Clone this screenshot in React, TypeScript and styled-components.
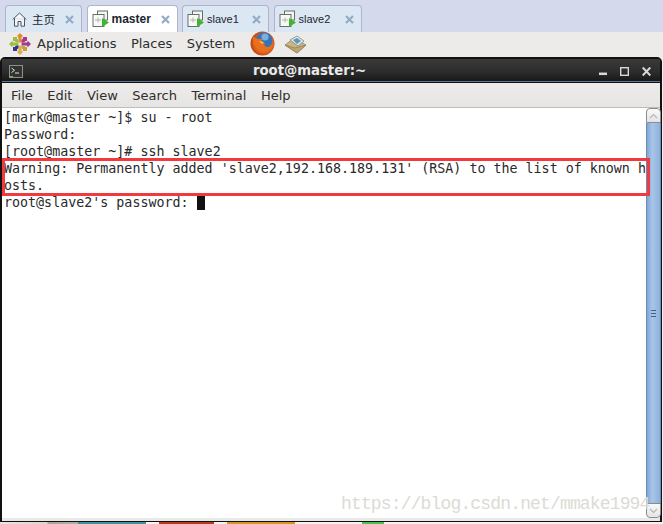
import React from "react";
import styled, { createGlobalStyle } from "styled-components";

const Global = createGlobalStyle`
  html, body { margin: 0; padding: 0; background: #f0f0ee; }
  body { width: 663px; height: 524px; overflow: hidden; font-family: "Liberation Sans", sans-serif; }
  * { box-sizing: border-box; }
`;
const Page = styled.div`display:flex;flex-direction:column;width:663px;height:524px;overflow:hidden;`;
const TabBar = styled.div`display:flex;align-items:flex-end;gap:4.5px;height:32px;padding-left:5px;background:#d4d9ec;flex:none;`;
const Tab = styled.div<{ $active?: boolean; $w: number }>`
  display:flex;align-items:center;width:${p => p.$w}px;height:27px;padding:0 7px 0 ${p => p.$active ? 4 : 4}px;
  gap:2px;border:1px solid #a9b6cc;border-bottom:0;border-radius:4px 4px 0 0;
  background:${p => p.$active ? "#ffffff" : "#dce7f4"};
  font-size:${p => p.$active ? 12 : 11}px;font-weight:${p => p.$active ? 700 : 400};color:#1c2530;
`;
const TabLabel = styled.span<{ $cjk?: boolean }>`flex:1;white-space:nowrap;font-size:${p => p.$cjk ? "11.5px" : "inherit"};font-family:${p => p.$cjk ? `"Noto Sans CJK SC", sans-serif` : `"Liberation Sans", sans-serif`};`;
const TabGlyph = styled.svg`flex:none;`;
const HomeGlyph = styled(TabGlyph)`margin:0 3px 0 2px;`;
const Panel = styled.div`display:flex;align-items:center;height:25px;padding:0 0 2px 9px;background:#ecebe9;flex:none;font-family:"DejaVu Sans",sans-serif;font-size:13px;color:#2d2d2d;`;
const PanelItem = styled.span`margin-right:14.5px;&:first-of-type{margin-left:6px;}`;
const PanelGlyph = styled.svg`flex:none;`;
const MailGlyph = styled(PanelGlyph)`margin:1px 0 0 9px;`;
const TerminalWindow = styled.div`display:flex;flex-direction:column;flex:1;width:662px;min-height:0;border:2px solid #111;border-bottom-width:1px;border-radius:5px 5px 0 0;`;
const TitleBar = styled.div`display:flex;align-items:center;height:23px;padding:0 9px 0 7px;background:linear-gradient(#3a3a3a,#2c2c2c 60%,#181818);border-bottom:1px solid #5d7796;flex:none;`;
const TitleText = styled.span`flex:1;margin-right:3px;text-align:center;font-family:"DejaVu Sans",sans-serif;font-weight:700;font-size:13.25px;color:#e9e9e9;`;
const TermGlyph = styled.svg`flex:none;margin-top:2px;`;
const WindowButtons = styled.div`display:flex;gap:13px;align-items:center;margin-top:3px;`;
const Divider = styled.div`height:1px;background:#111;flex:none;`;
const MenuBar = styled.div`display:flex;align-items:center;gap:14.5px;height:25px;padding-left:9px;background:linear-gradient(#edecea,#e6e5e3);border-bottom:1px solid #bdbdbb;flex:none;font-family:"DejaVu Sans",sans-serif;font-size:13px;color:#2e2e2e;`;
const Content = styled.div`position:relative;display:flex;flex:1;min-height:0;background:#fff;border-bottom:3px solid #e9e9e9;`;
const Screen = styled.pre`flex:1;margin:0;padding:1px 0 0 2px;font-family:"DejaVu Sans Mono","Liberation Mono",monospace;font-size:13.33px;line-height:17px;color:#2a2a2a;white-space:pre;`;
const Cursor = styled.span`display:inline-block;width:8px;height:15px;background:#111;vertical-align:-3px;`;
const Scrollbar = styled.div`display:flex;flex-direction:column;width:15px;flex:none;`;
const ScrollButton = styled.div<{ $down?: boolean }>`height:15px;flex:none;border:1px solid #8c8c8c;border-radius:${p => p.$down ? "0 0 4px 4px" : "4px 4px 0 0"};background:linear-gradient(#fafafa,#e4e4e4);display:flex;align-items:center;justify-content:center;`;
const Thumb = styled.div`flex:1;display:flex;align-items:center;justify-content:center;background:linear-gradient(90deg,#7ea5d4,#a9c6e8 40%,#8cb0dc);border-left:1px solid #6d8db5;border-right:1px solid #6d8db5;`;
const Grip = styled.div`width:5px;height:7px;border-top:1px solid #3f628f;border-bottom:1px solid #3f628f;position:relative;&::after{content:"";position:absolute;left:0;right:0;top:2px;height:1px;background:#3f628f;}`;
const Highlight = styled.div`position:absolute;left:0;top:50px;width:648px;height:38px;border:3px solid #f03a3e;pointer-events:none;`;
const Watermark = styled.div`position:absolute;left:339px;top:386px;font-family:"Liberation Mono",monospace;font-size:18px;letter-spacing:-.85px;color:#dcdbd4;white-space:nowrap;`;
const Dock = styled.div`display:flex;height:2px;flex:none;background:#f4f4f2;`;
const DockBlock = styled.div<{ $w: number; $c: string; $ml: number }>`width:${p => p.$w}px;margin-left:${p => p.$ml}px;background:${p => p.$c};`;

const CloseX = () => (
  <TabGlyph width="9" height="9" viewBox="0 0 9 9"><path d="M1 1l7 7M8 1l-7 7" stroke="#94abc6" strokeWidth="2.2" /></TabGlyph>
);
const Home = () => (
  <HomeGlyph width="15" height="15" viewBox="0 0 15 15">
    <path d="M.7 7.5L7.5 1l6.800 6.500M2.500 6.200v8h3.500V9.500h3v4.700h3.500v-8" fill="#f4f6f8" stroke="#4c5560" strokeWidth="1" />
  </HomeGlyph>
);
const Vm = () => (
  <TabGlyph width="18" height="18" viewBox="0 0 18 18">
    <rect x="5.5" y="1" width="10" height="9" fill="#f3f5f3" stroke="#66706a" />
    <rect x="1" y="4.5" width="11" height="12" fill="#f9f9f7" stroke="#66706a" />
    <path d="M3 10h6M6 7.5v5" stroke="#a8b8a8" />
    <path d="M10 8l7 4.5-7 4.5z" fill="#3fb52f" />
  </TabGlyph>
);
const CentOs = () => (
  <PanelGlyph width="22" height="22" viewBox="0 0 22 22">
    <path d="M11 0l3 3-1.500 1.500v5h-3v-5L8 3z" fill="#d9902f" />
    <path d="M22 11l-3 3-1.500-1.500h-5v-3h5L19 8z" fill="#a13c96" />
    <path d="M11 22l-3-3 1.500-1.500v-5h3v5L14 19z" fill="#d6b04a" />
    <path d="M0 11l3-3 1.500 1.500h5v3h-5L3 14z" fill="#9bbf3f" />
    <path d="M4 4h4v1.500L9.500 7v2.500H7L5.500 8H4z" fill="#a7b84a" />
    <path d="M18 4v4h-1.500L15 9.500h-2.500V7L14 5.500V4z" fill="#b0367f" />
    <path d="M18 18h-4v-1.500L12.500 15v-2.500H15l1.500 1.500H18z" fill="#c7a13a" />
    <path d="M4 18v-4h1.500L7 12.500h2.500V15L8 16.500V18z" fill="#35358f" />
  </PanelGlyph>
);
const Firefox = () => (
  <PanelGlyph width="25" height="25" viewBox="0 0 25 25">
    <defs>
      <radialGradient id="fx" cx=".55" cy=".5" r=".6"><stop offset="0" stopColor="#f2a33a" /><stop offset=".65" stopColor="#e2621d" /><stop offset="1" stopColor="#a93212" /></radialGradient>
    </defs>
    <circle cx="12.5" cy="12.5" r="12" fill="url(#fx)" />
    <ellipse cx="14" cy="9.5" rx="8.5" ry="8" fill="#3a73b5" />
    <circle cx="15" cy="6" r="3.5" fill="#79b0dc" />
    <path d="M2.500 6c.5 9 5 15 13.500 14 4-.6 6.400-3 7.400-6.500-2 2-6.400 3.500-8.400 1.500-1-1-1-2 0-3-3 0-4-2-3-4-3 0-5 0-6-1-1 0-2-2-3.500-1z" fill="#e8701d" />
    <path d="M9 10l5 1-2 2z" fill="#f7c35b" />
  </PanelGlyph>
);
const Mail = () => (
  <MailGlyph width="23" height="19" viewBox="0 0 23 19">
    <path d="M1 10L10 3l12 7-9 8z" fill="#cfb483" stroke="#8d7a59" strokeWidth=".7" />
    <path d="M6 5l7-4 7 5-6 5z" fill="#dce6ec" stroke="#68808f" strokeWidth=".7" />
    <path d="M9 5l4-2 4 3-4 3z" fill="#5c9aa8" />
    <path d="M1 10l10 3 11-3-9 8z" fill="#bfa474" stroke="#8d7a59" strokeWidth=".7" />
  </MailGlyph>
);
const TermIcon = () => (
  <TermGlyph width="14" height="13" viewBox="0 0 14 13">
    <rect x=".5" y=".5" width="13" height="12" fill="#30332f" stroke="#8f8f8b" />
    <path d="M2.500 3l3 2.300-3 2.300M6 8h4" stroke="#e2e2e2" fill="none" />
    <path d="M1 11.500h3" stroke="#6fc04a" />
  </TermGlyph>
);
const Chevron = ({ down }: { down?: boolean }) => (
  <svg width="9" height="6" viewBox="0 0 9 6"><path d={down ? "M1 1l3.500 3.500L8 1" : "M1 5l3.500-3.500L8 5"} fill="none" stroke="#b5b5b5" strokeWidth="1.200" /></svg>
);

const lines = `[mark@master ~]$ su - root
Password:
[root@master ~]# ssh slave2
Warning: Permanently added 'slave2,192.168.189.131' (RSA) to the list of known h
osts.
root@slave2's password: `;

export default function App() {
  return (
    <Page>
      <Global />
      <TabBar>
        <Tab $w={77}><Home /><TabLabel $cjk>主页</TabLabel><CloseX /></Tab>
        <Tab $active $w={91}><Vm /><TabLabel>master</TabLabel><CloseX /></Tab>
        <Tab $w={87}><Vm /><TabLabel>slave1</TabLabel><CloseX /></Tab>
        <Tab $w={88}><Vm /><TabLabel>slave2</TabLabel><CloseX /></Tab>
      </TabBar>
      <Panel>
        <CentOs />
        <PanelItem>Applications</PanelItem>
        <PanelItem>Places</PanelItem>
        <PanelItem>System</PanelItem>
        <Firefox />
        <Mail />
      </Panel>
      <TerminalWindow>
        <TitleBar>
          <TermIcon />
          <TitleText>root@master:~</TitleText>
          <WindowButtons>
            <svg width="8" height="9" viewBox="0 0 8 9"><path d="M0 6.800h8" stroke="#d8d8d8" strokeWidth="2.500" /></svg>
            <svg width="9" height="9" viewBox="0 0 9 9"><rect x=".7" y=".7" width="7.600" height="7.600" fill="none" stroke="#d8d8d8" strokeWidth="1.400" /></svg>
            <svg width="9" height="9" viewBox="0 0 9 9"><path d="M.7.500l7.600 8M8.300.500l-7.600 8" stroke="#d8d8d8" strokeWidth="2" /></svg>
          </WindowButtons>
        </TitleBar>
        <Divider />
        <MenuBar>
          {["File", "Edit", "View", "Search", "Terminal", "Help"].map(m => <span key={m}>{m}</span>)}
        </MenuBar>
        <Content>
          <Screen>{lines}<Cursor /></Screen>
          <Scrollbar>
            <ScrollButton><Chevron /></ScrollButton>
            <Thumb><Grip /></Thumb>
            <ScrollButton $down><Chevron down /></ScrollButton>
          </Scrollbar>
          <Highlight />
          <Watermark>https://blog.csdn.net/mmake1994</Watermark>
        </Content>
      </TerminalWindow>
      <Dock>
        <DockBlock $ml={0} $w={78} $c="linear-gradient(90deg,#e8e8dc,#d8d8c8 60%,#a8a898 62%,#b0b0a0)" />
        <DockBlock $ml={0} $w={68} $c="#3b96a0" />
        <DockBlock $ml={13} $w={55} $c="#bb3a18" />
        <DockBlock $ml={13} $w={68} $c="#d59622" />
        <DockBlock $ml={67} $w={22} $c="#4cc24a" />
      </Dock>
    </Page>
  );
}
